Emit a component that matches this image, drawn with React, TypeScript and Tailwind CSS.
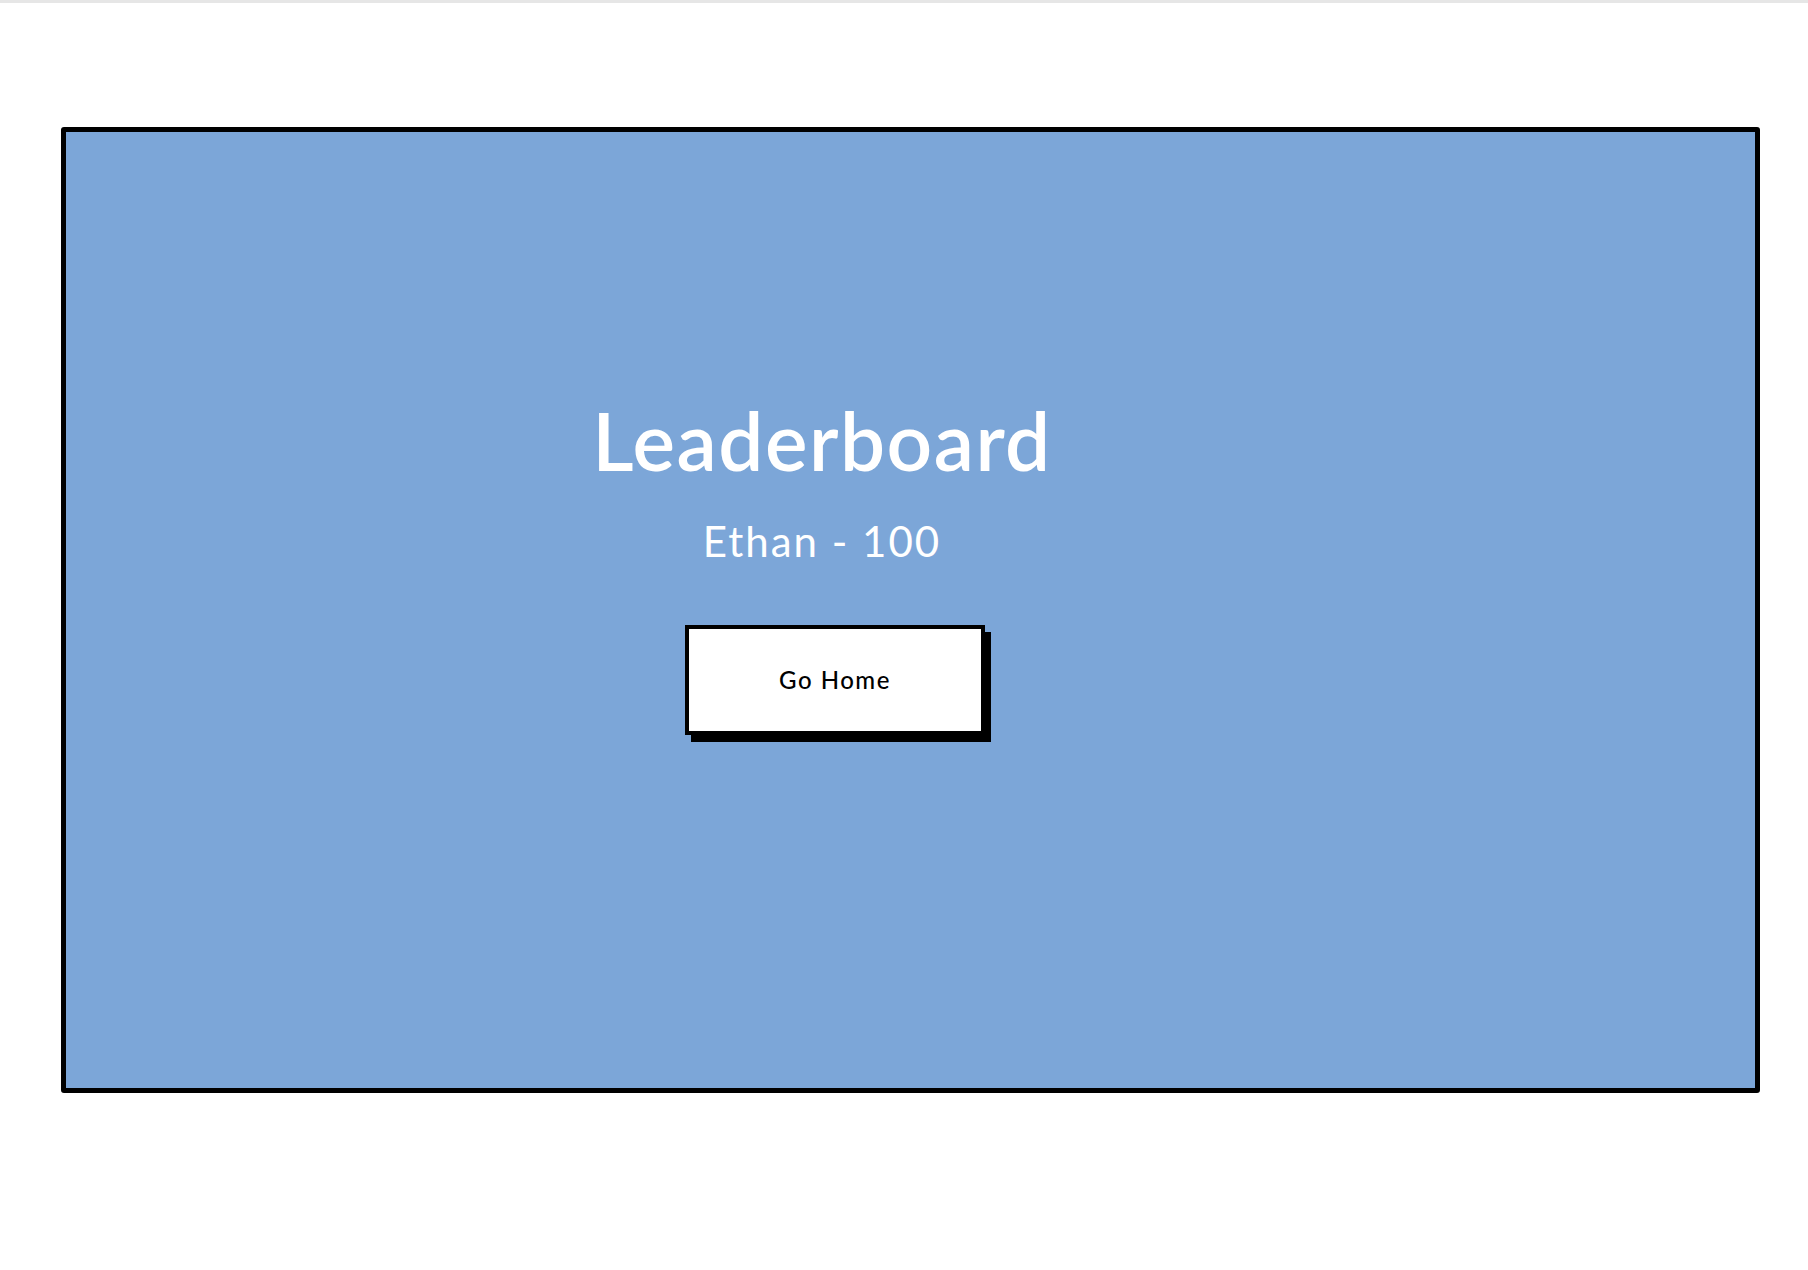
export default function App() {
  return (
    <div className="min-h-screen w-full border-t-[3px] border-[#e6e6e6] bg-white font-['Lato',sans-serif]">
      <div className="ml-[61px] mt-[124px] flex h-[966px] w-[1699px] flex-col rounded-[3px] border-[5px] border-black bg-[#7ca6d8] pr-[177px] pt-[268px]">
        <div className="flex flex-col items-center">
          <h1 className="text-[80px] leading-none font-semibold tracking-[1.5px] text-white">Leaderboard</h1>
          <p className="mt-[40px] text-[42px] leading-none tracking-[2px] text-white">Ethan - 100</p>
          <button className="ml-[26px] mt-[63px] h-[110px] w-[300px] border-[4px] border-black bg-white text-[24px] font-medium tracking-[1.5px] text-black shadow-[6px_7px_0_0_#000]">
            Go Home
          </button>
        </div>
      </div>
    </div>
  )
}
